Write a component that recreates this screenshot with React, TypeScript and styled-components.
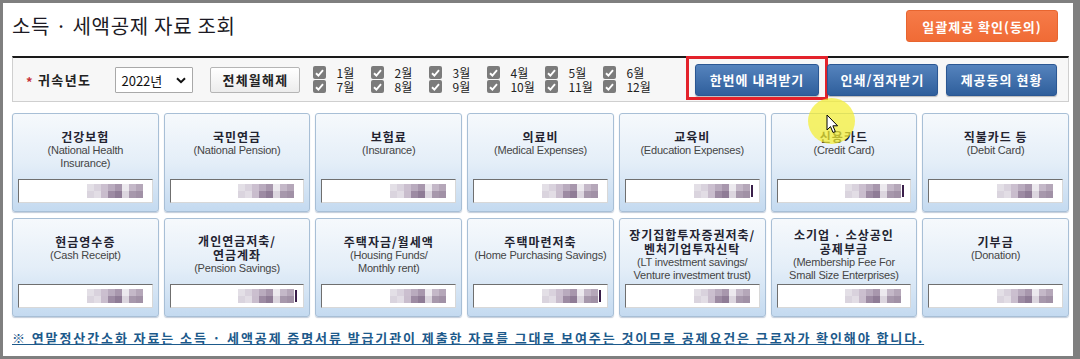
import React from "react";
import styled, { createGlobalStyle } from "styled-components";

const Global = createGlobalStyle`
  html, body { margin: 0; padding: 0; background: #fff; }
  body { font-family: "Noto Sans CJK KR", "Noto Sans", sans-serif; }
  * { box-sizing: border-box; }
`;

const Frame = styled.div`
  position: relative;
  width: 1080px;
  height: 359px;
  border-style: solid;
  border-color: #7f7f7f;
  border-width: 3px 7px 3px 3px;
  padding: 0 4px 0 9px;
  background: #fff;
  display: flex;
  flex-direction: column;
  overflow: hidden;
`;

const Header = styled.div`
  margin-top: 7px;
  height: 32px;
  display: flex;
  align-items: center;
  justify-content: space-between;
  padding-right: 11px;
`;

const Title = styled.h1`
  margin: 0;
  font-size: 20px;
  line-height: 26px;
  font-weight: 400;
  color: #1c1a24;
  letter-spacing: 0.7px;
`;

const OrangeButton = styled.button`
  width: 152px;
  height: 32px;
  border: 1px solid #e8652f;
  border-radius: 3px;
  background: linear-gradient(#f67b48, #f06b36);
  color: #fff;
  font-family: "Noto Sans CJK KR", sans-serif;
  font-size: 13px;
  font-weight: 700;
  letter-spacing: 1px;
  padding: 0;
`;

const FilterBar = styled.div`
  margin-top: 14px;
  height: 46px;
  border: 1px solid #cfcfcf;
  border-top: 2px solid #1a1a1a;
  background: #f7f7f7;
  display: flex;
  align-items: center;
  padding: 0 11px 0 13px;
`;

const Star = styled.span`
  color: #c8343a;
  font-size: 13px;
  font-weight: 700;
  width: 12px;
  margin-top: 3px;
`;

const Label = styled.span`
  font-size: 13px;
  font-weight: 700;
  color: #222;
  letter-spacing: 1.4px;
`;

const SelectWrap = styled.div`
  position: relative;
  margin-left: 24px;
  width: 78px;
  height: 26px;
`;

const YearSelect = styled.select`
  appearance: none;
  -webkit-appearance: none;
  width: 100%;
  height: 100%;
  border: 1px solid #a9a9a9;
  border-radius: 1px;
  background: #fff;
  font-family: "Noto Sans CJK KR", sans-serif;
  font-size: 13px;
  color: #111;
  padding: 0 0 0 5px;
  outline: none;
`;

const Chevron = styled.svg`
  position: absolute;
  right: 7px;
  top: 10px;
  pointer-events: none;
`;

const LightButton = styled.button`
  margin-left: 17px;
  width: 90px;
  height: 26px;
  border: 1px solid #b5b5b5;
  border-radius: 2px;
  background: linear-gradient(#ffffff, #ececec);
  font-family: "Noto Sans CJK KR", sans-serif;
  font-size: 13px;
  font-weight: 700;
  letter-spacing: 1.2px;
  color: #222;
  padding: 0;
`;

const MonthGrid = styled.div`
  margin-left: 13px;
  display: grid;
  grid-template-columns: repeat(6, 58px);
  row-gap: 1px;
`;

const MonthItem = styled.label`
  display: flex;
  align-items: center;
  height: 13px;
  line-height: 13px;
  gap: 10px;
  font-size: 12px;
  color: #222;
`;

const CheckBox = styled.span`
  width: 13px;
  height: 13px;
  border-radius: 2px;
  background: #7b7b7b;
  display: flex;
  align-items: center;
  justify-content: center;
  flex: none;
`;

const ButtonGroup = styled.div`
  margin-left: auto;
  display: flex;
  gap: 8px;
`;

const BlueButton = styled.button<{ $w: number }>`
  position: relative;
  width: ${(p) => p.$w}px;
  height: 32px;
  border: 1px solid #2b5793;
  border-radius: 3px;
  background: linear-gradient(#5583bd, #2f5f9c);
  color: #fff;
  font-family: "Noto Sans CJK KR", sans-serif;
  font-size: 13px;
  font-weight: 700;
  letter-spacing: 1px;
  padding: 0;
  box-shadow: 0 1px 1px rgba(0, 0, 0, 0.25);
`;

const Highlight = styled.span`
  position: absolute;
  left: -10px;
  right: -10px;
  top: -9px;
  bottom: -5px;
  border: 3px solid #e3222b;
  pointer-events: none;
`;

const CardGrid = styled.div`
  margin-top: 11px;
  display: grid;
  grid-template-columns: repeat(7, 1fr);
  column-gap: 5px;
  row-gap: 6px;
`;

const Card = styled.div`
  height: 99px;
  border: 1px solid #a8bfd6;
  border-radius: 3px;
  background: linear-gradient(#f6f9fc 0%, #e4eef8 50%, #c4daf0 100%);
  box-shadow: 0 1px 1px rgba(80, 110, 150, 0.35);
  display: flex;
  flex-direction: column;
  padding: 6px 5px 8px 5px;
`;

const CardBody = styled.div`
  flex: 1;
  display: flex;
  align-items: center;
  justify-content: center;
`;

const CardText = styled.div`
  min-height: 40px;
  text-align: center;
`;

const CardTitle = styled.div`
  font-size: 12px;
  font-weight: 700;
  line-height: 14px;
  color: #232330;
  letter-spacing: 1px;
  white-space: nowrap;
`;

const CardSub = styled.div`
  font-family: "Liberation Sans", Arial, sans-serif;
  font-size: 11px;
  line-height: 13px;
  color: #454545;
  letter-spacing: -0.2px;
  white-space: nowrap;
`;

const AmountBox = styled.div`
  height: 24px;
  background: #fff;
  border-top: 1px solid #6f6f6f;
  border-left: 1px solid #6f6f6f;
  border-right: 1px solid #d8d8d8;
  border-bottom: 1px solid #d8d8d8;
  display: flex;
  align-items: center;
  justify-content: flex-end;
  padding-right: 5px;
`;

const Footer = styled.p`
  margin: 12px 0 0 0;
  font-size: 13px;
  line-height: 18px;
  font-weight: 700;
  color: #1d5a8b;
  text-decoration: underline;
  letter-spacing: 1.9px;
  white-space: nowrap;
`;

const Spot = styled.div`
  position: absolute;
  left: 805px;
  top: 95px;
  width: 47px;
  height: 46px;
  border-radius: 50%;
  background: rgba(244, 238, 50, 0.72);
  pointer-events: none;
`;

const Cursor = styled.svg`
  position: absolute;
  left: 823px;
  top: 111px;
  pointer-events: none;
`;

const mosaicCols = [
  ["#e3dfe6", "#dad4de"],
  ["#d9d2dd", "#e2dde5"],
  ["#cbbfcf", "#c9bdcd"],
  ["#b9abbe", "#9d8ba3"],
  ["#a897ad", "#8f7c96"],
  ["#ece9ee", "#dcd6df"],
  ["#c4b8c8", "#a798ac"],
  ["#b5a7b9", "#a191a6"],
];

const Mosaic: React.FC<{ tail?: boolean }> = ({ tail }) => (
  <svg width={60} height={14} viewBox="0 0 60 14">
    {mosaicCols.map((c, i) => (
      <g key={i}>
        <rect x={i * 7} y={0} width={7} height={7} fill={c[0]} />
        <rect x={i * 7} y={7} width={7} height={7} fill={c[1]} />
      </g>
    ))}
    {tail && <rect x={57} y={1} width={2} height={12} fill="#3a1f4a" />}
  </svg>
);

type CardData = { title: string[]; sub: string[]; tail?: boolean };

const cards: CardData[] = [
  { title: ["건강보험"], sub: ["(National Health", "Insurance)"] },
  { title: ["국민연금"], sub: ["(National Pension)"] },
  { title: ["보험료"], sub: ["(Insurance)"] },
  { title: ["의료비"], sub: ["(Medical Expenses)"] },
  { title: ["교육비"], sub: ["(Education Expenses)"], tail: true },
  { title: ["신용카드"], sub: ["(Credit Card)"], tail: true },
  { title: ["직불카드 등"], sub: ["(Debit Card)"] },
  { title: ["현금영수증"], sub: ["(Cash Receipt)"] },
  { title: ["개인연금저축/", "연금계좌"], sub: ["(Pension Savings)"], tail: true },
  { title: ["주택자금/월세액"], sub: ["(Housing Funds/", "Monthly rent)"] },
  { title: ["주택마련저축"], sub: ["(Home Purchasing Savings)"], tail: true },
  {
    title: ["장기집합투자증권저축/", "벤처기업투자신탁"],
    sub: ["(LT investment savings/", "Venture investment trust)"],
  },
  {
    title: ["소기업 · 소상공인", "공제부금"],
    sub: ["(Membership Fee For", "Small Size Enterprises)"],
  },
  { title: ["기부금"], sub: ["(Donation)"] },
];

const monthOrder = [1, 2, 3, 4, 5, 6, 7, 8, 9, 10, 11, 12];

const Check = () => (
  <CheckBox>
    <svg width="9" height="8" viewBox="0 0 9 8">
      <path d="M1 4.2 L3.4 6.5 L8 1.2" stroke="#fff" strokeWidth="1.9" fill="none" />
    </svg>
  </CheckBox>
);

export default function App() {
  return (
    <>
      <Global />
      <Frame>
        <Header>
          <Title>소득 · 세액공제 자료 조회</Title>
          <OrangeButton>일괄제공 확인(동의)</OrangeButton>
        </Header>
        <FilterBar>
          <Star>*</Star>
          <Label>귀속년도</Label>
          <SelectWrap>
            <YearSelect defaultValue="2022">
              <option value="2022">2022년</option>
            </YearSelect>
            <Chevron width="10" height="7" viewBox="0 0 10 7">
              <path d="M1 1.2 L5 5.2 L9 1.2" stroke="#111" strokeWidth="2" fill="none" />
            </Chevron>
          </SelectWrap>
          <LightButton>전체월해제</LightButton>
          <MonthGrid>
            {monthOrder.map((m) => (
              <MonthItem key={m}>
                <Check />
                {m}월
              </MonthItem>
            ))}
          </MonthGrid>
          <ButtonGroup>
            <BlueButton $w={124}>
              한번에 내려받기
              <Highlight />
            </BlueButton>
            <BlueButton $w={111}>인쇄/점자받기</BlueButton>
            <BlueButton $w={111}>제공동의 현황</BlueButton>
          </ButtonGroup>
        </FilterBar>
        <CardGrid>
          {cards.map((c, i) => (
            <Card key={i}>
              <CardBody>
                <CardText>
                  {c.title.map((t) => (
                    <CardTitle key={t}>{t}</CardTitle>
                  ))}
                  {c.sub.map((s) => (
                    <CardSub key={s}>{s}</CardSub>
                  ))}
                </CardText>
              </CardBody>
              <AmountBox>
                <Mosaic tail={c.tail} />
              </AmountBox>
            </Card>
          ))}
        </CardGrid>
        <Footer>
          ※ 연말정산간소화 자료는 소득 · 세액공제 증명서류 발급기관이 제출한 자료를 그대로 보여주는 것이므로 공제요건은 근로자가 확인해야 합니다.
        </Footer>
        <Spot />
        <Cursor width="13" height="20" viewBox="0 0 13 20">
          <path
            d="M1 1 L1 16 L4.5 12.6 L7 18.5 L9.3 17.5 L6.9 11.8 L11.6 11.8 Z"
            fill="#fff"
            stroke="#000"
            strokeWidth="1"
            strokeLinejoin="round"
          />
        </Cursor>
      </Frame>
    </>
  );
}
